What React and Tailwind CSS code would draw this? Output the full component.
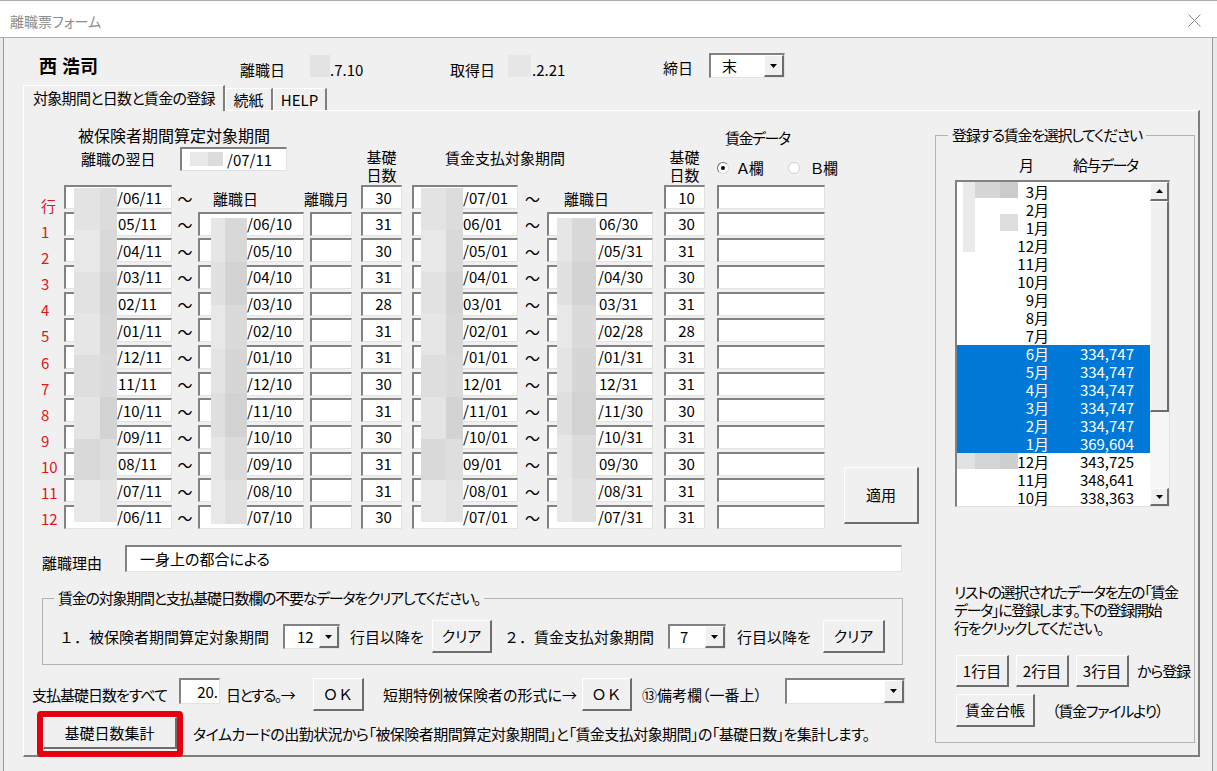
import React from "react";

const sunk =
  "bg-white border-t-2 border-l-2 border-r border-b border-t-[#828282] border-l-[#828282] border-r-[#e2e2e2] border-b-[#e2e2e2]";
const raised =
  "bg-[#f0f0f0] border-t border-l border-r-2 border-b-2 border-t-white border-l-white border-r-[#6d6d6d] border-b-[#6d6d6d]";

const rows = [
  ["/06/11", null, "30", "/07/01", null, "10"],
  ["05/11", "/06/10", "31", "06/01", "06/30", "30"],
  ["/04/11", "/05/10", "30", "/05/01", "/05/31", "31"],
  ["/03/11", "/04/10", "31", "/04/01", "/04/30", "30"],
  ["02/11", "/03/10", "28", "03/01", "03/31", "31"],
  ["/01/11", "/02/10", "31", "/02/01", "/02/28", "28"],
  ["/12/11", "/01/10", "31", "/01/01", "/01/31", "31"],
  ["11/11", "/12/10", "30", "12/01", "12/31", "31"],
  ["/10/11", "/11/10", "31", "/11/01", "/11/30", "30"],
  ["/09/11", "/10/10", "30", "/10/01", "/10/31", "31"],
  ["08/11", "/09/10", "31", "09/01", "09/30", "30"],
  ["/07/11", "/08/10", "31", "/08/01", "/08/31", "31"],
  ["/06/11", "/07/10", "30", "/07/01", "/07/31", "31"],
];

const labels = ["行", "1", "2", "3", "4", "5", "6", "7", "8", "9", "10", "11", "12"];

const wages = [
  ["3月", ""], ["2月", ""], ["1月", ""], ["12月", ""], ["11月", ""], ["10月", ""],
  ["9月", ""], ["8月", ""], ["7月", ""],
  ["6月", "334,747", true], ["5月", "334,747", true], ["4月", "334,747", true],
  ["3月", "334,747", true], ["2月", "334,747", true], ["1月", "369,604", true],
  ["12月", "343,725"], ["11月", "348,641"], ["10月", "338,363"],
];

// redaction mosaics (left / right shade per band)
const mosaicA = [
  ["bg-[#e3e3e3]", "bg-[#dcdcdc]"], ["bg-[#e8e8e8]", "bg-[#d9d9d9]"],
  ["bg-[#e2e2e2]", "bg-[#d4d4d4]"], ["bg-[#e6e6e6]", "bg-[#d7d7d7]"],
  ["bg-[#dedede]", "bg-[#dadada]"], ["bg-[#e4e4e4]", "bg-[#d3d3d3]"],
  ["bg-[#d9d9d9]", "bg-[#dedede]"], ["bg-[#e9e9e9]", "bg-[#e3e3e3]"],
];
const mosaicB = [
  ["bg-[#e6e6e6]", "bg-[#d8d8d8]"], ["bg-[#e1e1e1]", "bg-[#d3d3d3]"],
  ["bg-[#e8e8e8]", "bg-[#dadada]"], ["bg-[#e4e4e4]", "bg-[#d6d6d6]"],
  ["bg-[#dfdfdf]", "bg-[#d2d2d2]"], ["bg-[#e7e7e7]", "bg-[#dbdbdb]"],
  ["bg-[#e9e9e9]", "bg-[#e0e0e0]"],
];

function Strip({ pos, split, bands }) {
  return (
    <div className={`absolute flex flex-col ${pos}`}>
      {bands.map((b, i) => (
        <div key={i} className="flex-1 flex">
          <div className={`${split} ${b[0]}`} />
          <div className={`flex-1 ${b[1]}`} />
        </div>
      ))}
    </div>
  );
}

function Tri({ up = false }) {
  return (
    <svg width="7" height="4" viewBox="0 0 7 4" className="block">
      <path d={up ? "M0 4L3.5 0L7 4Z" : "M0 0H7L3.5 4Z"} fill="#000" />
    </svg>
  );
}

function Combo({ className, value, pad }) {
  return (
    <div className={`${sunk} flex shrink-0 ${className}`}>
      <div className={`flex-1 flex items-center ${pad}`}>{value}</div>
      <div className={`${raised} w-[20px] flex items-center justify-center`}>
        <Tri />
      </div>
    </div>
  );
}

function Btn({ className, children }) {
  return (
    <button type="button" className={`${raised} shrink-0 flex items-center justify-center ${className}`}>
      {children}
    </button>
  );
}

export default function App() {
  return (
    <div className="w-[1217px] h-[771px] overflow-hidden bg-[#f0f0f0] text-black text-[15px] leading-[20px] font-['Noto_Sans_CJK_JP','Noto_Sans',sans-serif] [font-feature-settings:'palt'] flex flex-col">
      {/* ===== TITLE BAR ===== */}
      <div className="h-[38px] shrink-0 bg-white border-t border-b border-[#ababab] flex items-center justify-between pl-[10px] pr-[16px]">
        <span className="text-[14px] text-[#8c8c8c] pt-[4px]">離職票フォーム</span>
        <svg width="13" height="13" viewBox="0 0 13 13" className="mt-[2px]">
          <path d="M0.5 0.5L12.5 12.5M12.5 0.5L0.5 12.5" stroke="#8a8a8a" strokeWidth="1" />
        </svg>
      </div>

      <div className="flex-1 flex pl-[3px] pr-[4px] bg-[#e9e9e9]">
        <div className="flex-1 flex flex-col border-l border-r border-[#9b9b9b] bg-[#f0f0f0]">
          {/* ===== HEADER ===== */}
          <div className="h-[47px] shrink-0 flex items-start whitespace-nowrap">
            <span className="ml-[35px] mt-[15px] w-[201px] text-[18px] leading-[24px] font-bold">
              西<span className="ml-[5px]">浩司</span>
            </span>
            <span className="mt-[22px] w-[70px]">離職日</span>
            <span className="mt-[17px] w-[20px] h-[22px] bg-[#e3e3e3]" />
            <span className="mt-[22px] w-[120px]">.7.10</span>
            <span className="mt-[22px] w-[58px]">取得日</span>
            <span className="mt-[17px] w-[23px] h-[22px] bg-[#e6e6e6]" />
            <span className="mt-[22px] w-[132px] pl-[1px]">.2.21</span>
            <span className="mt-[20px] w-[46px]">締日</span>
            <Combo className="mt-[15px] w-[76px] h-[25px]" value="末" pad="pl-[11px]" />
          </div>

          {/* ===== TABS ===== */}
          <div className="h-[25px] shrink-0 flex items-end pl-[19px] relative z-10 whitespace-nowrap">
            <div className="w-[202px] h-[26px] -mb-[1px] bg-[#f0f0f0] border-t border-l border-r-2 border-t-white border-l-white border-r-[#7d7d7d] flex items-center pl-[9px] pb-[1px] tracking-[-0.7px]">
              対象期間と日数と賃金の登録
            </div>
            <div className="w-[48px] h-[22px] border-t border-l border-r-2 border-t-white border-l-white border-r-[#7d7d7d] flex items-center justify-center">
              続紙
            </div>
            <div className="w-[54px] h-[22px] border-t border-l border-r-2 border-t-white border-l-white border-r-[#7d7d7d] flex items-center justify-center">
              HELP
            </div>
          </div>

          {/* ===== PAGE ===== */}
          <div className="ml-[19px] w-[1177px] h-[647px] shrink-0 flex border-t border-l border-r-2 border-b-2 border-t-white border-l-white border-r-[#7d7d7d] border-b-[#7d7d7d]">
            <div className="w-[911px] shrink-0 flex flex-col whitespace-nowrap">
              {/* column headings */}
              <div className="h-[74px] shrink-0 flex">
                <div className="w-[337px] flex flex-col">
                  <div className="ml-[54px] mt-[14px] text-[16px] leading-[20px]">被保険者期間算定対象期間</div>
                  <div className="mt-[2px] flex items-center h-[24px]">
                    <span className="ml-[57px] w-[99px]">離職の翌日</span>
                    <div className={`${sunk} relative w-[107px] h-[24px] flex items-center pl-[45px]`}>
                      /07/11
                      <div className="absolute left-[8px] top-[3px] w-[33px] h-[14px] flex">
                        <div className="w-[18px] bg-[#e8e8e8]" />
                        <div className="flex-1 bg-[#dcdcdc]" />
                      </div>
                    </div>
                  </div>
                </div>
                <div className="w-[41px] pt-[37px] text-center leading-[18px]">
                  基礎<br />日数
                </div>
                <div className="ml-[10px] w-[241px] pt-[37px] pl-[33px]">賃金支払対象期間</div>
                <div className="ml-[11px] w-[41px] pt-[37px] text-center leading-[18px]">
                  基礎<br />日数
                </div>
                <div className="ml-[12px] flex flex-col">
                  <span className="mt-[17px] ml-[8px] tracking-[-1.5px]">賃金データ</span>
                  <div className="mt-[10px] flex items-center">
                    <span className="w-[12px] h-[12px] rounded-full bg-white border border-t-[#707070] border-l-[#707070] border-r-[#d8d8d8] border-b-[#d8d8d8] flex items-center justify-center">
                      <span className="w-[4px] h-[4px] rounded-full bg-black" />
                    </span>
                    <span className="ml-[8px]">Ａ欄</span>
                    <span className="ml-[24px] w-[12px] h-[12px] rounded-full bg-white border border-[#cfcfcf]" />
                    <span className="ml-[11px]">Ｂ欄</span>
                  </div>
                </div>
              </div>

              {/* row grid */}
              <div className="flex items-start shrink-0">
                <div className="w-[40px] pt-[8px] flex flex-col">
                  {labels.map((l) => (
                    <div key={l} className="h-[26.1px] leading-[26.1px] pl-[17px] text-[#e3141c]">
                      {l}
                    </div>
                  ))}
                </div>
                <div className="relative flex flex-col gap-[2.67px]">
                  {rows.map((r, i) => (
                    <div key={i} className="flex h-[24px]">
                      <div className={`${sunk} w-[108px] flex items-center ${r[0].startsWith("/") ? "pl-[51px]" : "pl-[52px]"}`}>{r[0]}</div>
                      <div className="w-[26px] flex items-center justify-center pt-[3px]">～</div>
                      {r[1] ? (
                        <div className={`${sunk} w-[106px] flex items-center pl-[47px]`}>{r[1]}</div>
                      ) : (
                        <div className="w-[106px] flex items-center pl-[15px] pt-[3px]">離職日</div>
                      )}
                      {i === 0 ? (
                        <div className="ml-[6px] w-[42px] flex items-center pt-[3px]">
                          <span className="-ml-[6px]">離職月</span>
                        </div>
                      ) : (
                        <div className={`${sunk} ml-[6px] w-[42px]`} />
                      )}
                      <div className={`${sunk} ml-[9px] w-[41px] flex items-center justify-center pl-[3px]`}>{r[2]}</div>
                      <div className={`${sunk} ml-[10px] w-[106px] flex items-center pl-[49px]`}>{r[3]}</div>
                      <div className="w-[29px] flex items-center justify-center pt-[3px]">～</div>
                      {r[4] ? (
                        <div className={`${sunk} w-[106px] flex items-center ${r[4].startsWith("/") ? "pl-[49px]" : "pl-[50px]"}`}>{r[4]}</div>
                      ) : (
                        <div className="w-[106px] flex items-center pl-[17px] pt-[3px]">離職日</div>
                      )}
                      <div className={`${sunk} ml-[11px] w-[41px] flex items-center justify-center pl-[3px]`}>{r[5]}</div>
                      <div className={`${sunk} ml-[12px] w-[108px]`} />
                    </div>
                  ))}
                  {/* redacted year columns */}
                  <Strip pos="left-[10px] top-[3px] w-[43px] h-[334px]" split="w-[26px]" bands={mosaicA} />
                  <Strip pos="left-[147px] top-[33px] w-[36px] h-[306px]" split="w-[14px]" bands={mosaicB} />
                  <Strip pos="left-[357px] top-[3px] w-[42px] h-[334px]" split="w-[25px]" bands={mosaicA} />
                  <Strip pos="left-[493px] top-[33px] w-[39px] h-[304px]" split="w-[15px]" bands={mosaicB} />
                </div>
                <Btn className="ml-[19px] mt-[282px] w-[75px] h-[57px]">適用</Btn>
              </div>

              {/* reason */}
              <div className="mt-[13px] flex items-start shrink-0">
                <span className="ml-[18px] mt-[8px] w-[83px]">離職理由</span>
                <div className={`${sunk} w-[777px] h-[27px] flex items-center pl-[13px]`}>一身上の都合による</div>
              </div>

              {/* clear group */}
              <fieldset className="ml-[18px] mt-[15px] w-[861px] h-[77px] shrink-0 min-w-0 border border-[#b3b3b3] pl-[11px]">
                <legend className="px-[4px] leading-[20px] tracking-[-1.25px]">賃金の対象期間と支払基礎日数欄の不要なデータをクリアしてください。</legend>
                <div className="mt-[12px] h-[33px] flex items-center">
                  <span className="ml-[5px] w-[224px] [font-feature-settings:normal]">１．被保険者期間算定対象期間</span>
                  <Combo className="w-[57px] h-[25px]" value="12" pad="pl-[12px]" />
                  <span className="ml-[10px] w-[82px]">行目以降を</span>
                  <Btn className="w-[60px] h-[33px]">クリア</Btn>
                  <span className="ml-[12px] w-[164px] [font-feature-settings:normal]">２．賃金支払対象期間</span>
                  <Combo className="w-[58px] h-[25px]" value="7" pad="pl-[10px]" />
                  <span className="ml-[11px] w-[86px]">行目以降を</span>
                  <Btn className="w-[62px] h-[33px]">クリア</Btn>
                </div>
              </fieldset>

              {/* days row */}
              <div className="mt-[13px] h-[33px] shrink-0 flex items-start">
                <span className="ml-[8px] mt-[7px] w-[147px] tracking-[-1px]">支払基礎日数をすべて</span>
                <div className={`${sunk} w-[41px] h-[26px] flex items-center justify-end pr-[1px]`}>20.</div>
                <span className="ml-[6px] mt-[7px] w-[87px] tracking-[-1.5px]">日とする。→</span>
                <Btn className="w-[51px] h-[33px] [font-feature-settings:normal]">ＯＫ</Btn>
                <span className="ml-[19px] mt-[7px] w-[199px]">短期特例被保険者の形式に→</span>
                <Btn className="w-[50px] h-[33px] [font-feature-settings:normal]">ＯＫ</Btn>
                <span className="ml-[10px] mt-[7px] w-[143px]">⑬備考欄（一番上）</span>
                <Combo className="w-[120px] h-[26px]" value="" pad="" />
              </div>

              {/* tally row */}
              <div className="h-[46px] shrink-0 flex items-center">
                <div className="ml-[13px] w-[146px] h-[46px] border-[6px] border-[#e5000f] rounded-[4px] pb-[2px] flex">
                  <Btn className="w-[134px] h-[32px]">基礎日数集計</Btn>
                </div>
                <span className="ml-[10px] tracking-[-0.55px]">
                  タイムカードの出勤状況から「被保険者期間算定対象期間」と「賃金支払対象期間」の「基礎日数」を集計します。
                </span>
              </div>
            </div>

            {/* ===== WAGE LIST ===== */}
            <fieldset className="mt-[14px] w-[260px] h-[618px] shrink-0 min-w-0 border border-[#b3b3b3] pl-[12px] whitespace-nowrap">
              <legend className="px-[4px] leading-[20px] tracking-[-1.3px]">登録する賃金を選択してください</legend>
              <div className="mt-[10px] flex">
                <span className="ml-[71px] w-[54px]">月</span>
                <span className="tracking-[-1.5px]">給与データ</span>
              </div>
              <div className={`${sunk} ml-[7px] mt-[5px] w-[215px] h-[327px] flex overflow-hidden`}>
                <div className="relative w-[193px] pt-[1px]">
                  {wages.map((w, i) => (
                    <div key={i} className={`flex h-[18px] leading-[18px] ${w[2] ? "bg-[#0078d7] text-white" : ""}`}>
                      <span className="w-[92px] text-right">{w[0]}</span>
                      <span className="w-[85px] text-right">{w[1]}</span>
                    </div>
                  ))}
                  <div className="absolute left-[6px] top-0 w-[12px] h-[70px] bg-[#eaeaea]" />
                  <div className="absolute left-[18px] top-0 w-[25px] h-[16px] bg-[#d6d6d6]" />
                  <div className="absolute left-[43px] top-0 w-[18px] h-[16px] bg-[#cbcbcb]" />
                  <div className="absolute left-[43px] top-[32px] w-[18px] h-[17px] bg-[#dedede]" />
                  <div className="absolute left-0 top-[271px] w-[18px] h-[16px] bg-[#e2e2e2]" />
                  <div className="absolute left-[18px] top-[271px] w-[25px] h-[16px] bg-[#d5d5d5]" />
                  <div className="absolute left-[43px] top-[271px] w-[18px] h-[16px] bg-[#cfcfcf]" />
                </div>
                <div className="w-[19px] flex flex-col">
                  <div className={`${raised} h-[19px] flex items-center justify-center`}>
                    <Tri up />
                  </div>
                  <div className={`${raised} h-[211px]`} />
                  <div className="flex-1 bg-[#f6f6f6]" />
                  <div className={`${raised} h-[18px] flex items-center justify-center`}>
                    <Tri />
                  </div>
                </div>
              </div>
              <div className="ml-[6px] mt-[76px] leading-[18px] tracking-[-1.3px]">
                リストの選択されたデータを左の「賃金
                <br />
                データ」に登録します。下の登録開始
                <br />
                行をクリックしてください。
              </div>
              <div className="ml-[8px] mt-[18px] h-[32px] flex items-center">
                <Btn className="w-[53px] h-[32px]">1行目</Btn>
                <Btn className="ml-[7px] w-[53px] h-[32px]">2行目</Btn>
                <Btn className="ml-[7px] w-[53px] h-[32px]">3行目</Btn>
                <span className="ml-[8px] tracking-[-1.2px]">から登録</span>
              </div>
              <div className="ml-[8px] mt-[7px] h-[33px] flex items-center">
                <Btn className="w-[79px] h-[33px]">賃金台帳</Btn>
                <span className="ml-[17px] tracking-[-1.2px]">（賃金ファイルより）</span>
              </div>
            </fieldset>
          </div>
        </div>
      </div>
    </div>
  );
}
